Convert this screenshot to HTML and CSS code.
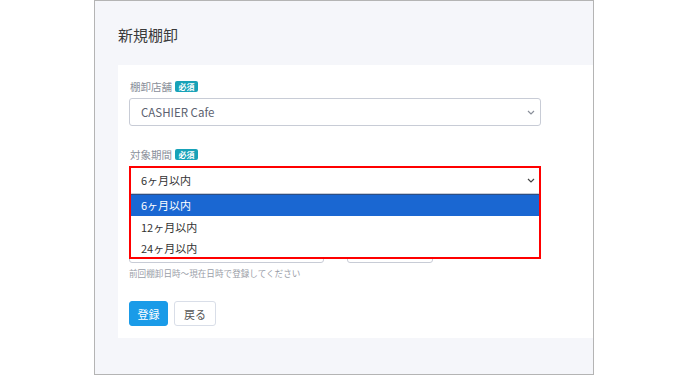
FILE: index.html
```html
<!DOCTYPE html>
<html lang="ja">

<head>
    <meta charset="UTF-8" />
    <meta name="viewport" content="width=device-width, initial-scale=1.0" />
    <title>新規棚卸</title>
    <link rel="stylesheet" href="styles.css">
</head>

<body>
    <main class="frame">
        <h1 class="title">新規棚卸</h1>
        <div class="card">
            <div class="label">棚卸店舗<span class="badge">必須</span></div>
            <div class="select">
                <span>CASHIER Cafe</span>
                <svg class="chevron" viewBox="0 0 8 5" width="8" height="5"><path d="M1 1l3 3 3-3" /></svg>
            </div>

            <div class="label period-label">対象期間<span class="badge">必須</span></div>
            <div class="select-wrap">
                <div class="select open">
                    <span>6ヶ月以内</span>
                    <svg class="chevron" viewBox="0 0 8 5" width="8" height="5"><path d="M1 1l3 3 3-3" /></svg>
                </div>
                <ul class="options">
                    <li class="selected">6ヶ月以内</li>
                    <li>12ヶ月以内</li>
                    <li>24ヶ月以内</li>
                </ul>
                <div class="mark"></div>
            </div>
            <div class="date-row">
                <div class="input date"></div>
                <div class="input time"></div>
            </div>
            <p class="help">前回棚卸日時〜現在日時で登録してください</p>

            <div class="actions">
                <button class="btn primary">登録</button>
                <button class="btn">戻る</button>
            </div>
        </div>
    </main>
</body>

</html>
```

FILE: styles.css
```css
* {
    box-sizing: border-box;
    margin: 0;
    padding: 0;
}

body {
    background: white;
    font-family: "Noto Sans CJK JP", "Noto Sans", sans-serif;
    color: #333;
}

.frame {
    margin-left: 94px;
    width: 500px;
    height: 375px;
    border: 1px solid #b4b4b4;
    background: #f5f6fa;
    padding: 24px 0 0 23px;
}

.title {
    font-size: 15px;
    font-weight: normal;
    line-height: 20px;
    color: #3a3a3a;
}

.card {
    margin-top: 20px;
    background: white;
    padding: 14px 0 12px 11px;
}

.label {
    display: flex;
    align-items: center;
    gap: 3px;
    height: 14px;
    font-size: 10.5px;
    color: #8a8f9a;
    padding-left: 1px;
}

.badge {
    background: #17a2b8;
    color: white;
    font-size: 8px;
    font-weight: bold;
    line-height: 11px;
    padding: 0 3.5px;
    border-radius: 2px;
}

.period-label {
    margin-top: 21px;
}

.select {
    margin-top: 5px;
    width: 412px;
    height: 28px;
    border: 1px solid #c8ccd6;
    border-radius: 3px;
    display: flex;
    align-items: center;
    justify-content: space-between;
    padding: 0 5px 0 11px;
    font-size: 11.5px;
    color: #5c6270;
}

.chevron {
    fill: none;
    stroke: #8a8f9a;
    stroke-width: 1.2;
}

.select-wrap {
    position: relative;
}

.select.open {
    color: #333;
    font-size: 11px;
}

.select.open .chevron {
    stroke: #444;
}

.options {
    position: absolute;
    top: 28px;
    left: 0;
    width: 412px;
    list-style: none;
    background: white;
    z-index: 1;
}

.options li {
    height: 21.5px;
    padding-top: 2px;
    line-height: 19.5px;
    padding-left: 12px;
    font-size: 11px;
    color: #333;
}

.options li.selected {
    background: #1a67d2;
    color: white;
    box-shadow: inset 0 1px 0 #2c4f86;
}

.mark {
    position: absolute;
    top: 0;
    left: 0;
    width: 412px;
    height: 93px;
    border: 2px solid #f00;
    z-index: 2;
}

.date-row {
    display: flex;
    gap: 23px;
    margin-top: 41px;
}

.input {
    height: 28px;
    border: 1px solid #c8ccd6;
    border-radius: 3px;
}

.input.date {
    width: 195px;
}

.input.time {
    width: 86px;
}

.help {
    margin-top: 4px;
    font-size: 8.6px;
    line-height: 12px;
    color: #9a9ea8;
}

.actions {
    display: flex;
    gap: 6px;
    margin-top: 22px;
}

.btn {
    height: 25px;
    padding: 0 9px;
    white-space: nowrap;
    font-family: inherit;
    font-size: 11px;
    border: 1px solid #d9dee8;
    border-radius: 3px;
    background: white;
    color: #555;
}

.btn.primary {
    width: 39px;
    padding: 0;
    background: #1a9be8;
    border-color: #1a9be8;
    color: white;
}
```
